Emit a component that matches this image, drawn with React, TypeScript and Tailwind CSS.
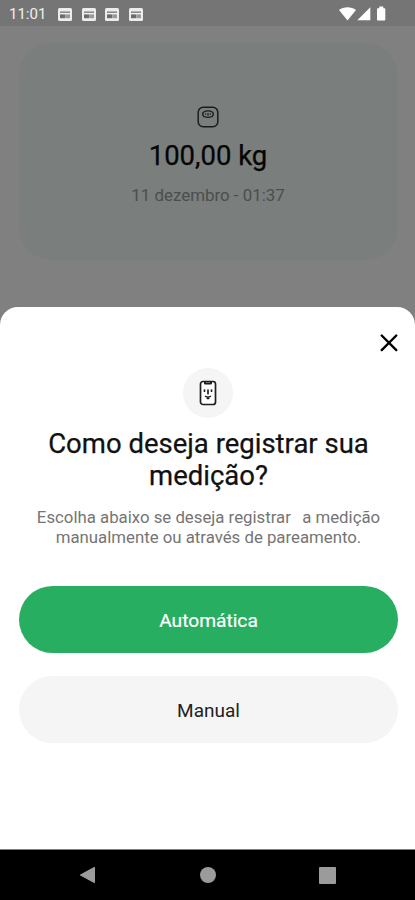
import { useState } from "react";

type Mode = "automatic" | "manual";

// Small "window" glyph used for pending notifications
function NotificationIcon() {
  return (
    <svg width="14" height="13" viewBox="0 0 14 13">
      <rect width="14" height="13" rx="1.5" fill="#ededed" />
      <rect x="2" y="3.4" width="10" height="1.6" fill="#8c8c8c" />
      <rect x="2" y="6.4" width="5.500" height="3.8" fill="#6c6c6c" />
      <rect x="8" y="6.4" width="4" height="3.8" fill="#999999" />
    </svg>
  );
}

function StatusBar() {
  return (
    <header className="flex h-[26px] shrink-0 items-center justify-between bg-[#757575] pt-[2px] pr-[28px] pl-[9px]">
      <div className="flex items-center">
        <span className="w-[49px] text-[15px] leading-none text-[#f0f0f0]">
          11:01
        </span>
        <div className="flex gap-[9.5px]">
          <NotificationIcon />
          <NotificationIcon />
          <NotificationIcon />
          <NotificationIcon />
        </div>
      </div>
      <svg width="48" height="16" viewBox="0 0 48 16" fill="#ffffff">
        <path d="M0 4C4.800.2 12.200.2 17 4L8.500 14.500Z" />
        <path d="M31.300 1.200V14.200H18.300Z" />
        <path d="M40.300.5h4v1.700h1.200a.8.8 0 0 1 .8.8v10.700a.8.8 0 0 1-.8.8h-6.700a.8.8 0 0 1-.8-.8V3a.8.8 0 0 1 .8-.8h1.500Z" />
      </svg>
    </header>
  );
}

function ScaleIcon() {
  return (
    <svg
      width="22"
      height="22"
      viewBox="0 0 22 22"
      fill="none"
      stroke="#1b1d1c"
      strokeWidth="1.500"
      strokeLinecap="round"
      strokeLinejoin="round"
    >
      <rect x="1.200" y="1.200" width="19.600" height="19.600" rx="5" />
      <path
        d="M6.300 6.200Q11 3.600 15.700 6.200Q17.200 8.200 15.300 10.500Q11 12.200 6.700 10.500Q4.800 8.200 6.300 6.200Z"
        strokeWidth="1.300"
      />
      <path d="M8.600 7.800v.5M13.400 7.800v.5M11 7.300v1.900" strokeWidth="1.200" />
    </svg>
  );
}

function PhoneFaceIcon() {
  return (
    <svg
      width="18"
      height="26"
      viewBox="0 0 18 26"
      fill="none"
      stroke="#1f1f1f"
      strokeWidth="1.700"
      strokeLinecap="round"
      strokeLinejoin="round"
    >
      <rect
        x="1.500"
        y="1.500"
        width="15"
        height="23"
        rx="2.500"
        fill="#ffffff"
      />
      <path d="M6 2.200v1.300h6V2.200" strokeWidth="2" />
      <path d="M5.500 10v1.200M12.500 10v1.200M9 10v3.700" />
      <path d="M6.500 16.300Q9 17.600 11.500 16.300M8.200 18.600h1.600" strokeWidth="1.500" />
    </svg>
  );
}

function NavigationBar() {
  return (
    <nav className="flex h-[51px] shrink-0 items-center justify-between border-t border-[#808080] bg-black px-[79px]">
      <svg width="17" height="18" viewBox="0 0 17 18">
        <path
          d="M1.300 9L15.500 1.300V16.700Z"
          fill="#9b9b9b"
          stroke="#9b9b9b"
          strokeLinejoin="round"
        />
      </svg>
      <span className="size-4 rounded-full bg-[#9b9b9b]" />
      <span className="size-[17px] rounded-[1px] bg-[#9b9b9b]" />
    </nav>
  );
}

export default function App() {
  const [mode, setMode] = useState<Mode | null>(null);

  return (
    <div className="flex h-[900px] w-[415px] flex-col overflow-hidden bg-[#808080] font-[Roboto,sans-serif]">
      <StatusBar />

      <main className="h-[281px] shrink-0 pt-[17px] pr-[17px] pl-[19px]">
        <section className="flex h-[217px] flex-col items-center rounded-[32px] bg-[#7a7e7c] pt-[63px] pr-[1px]">
          <ScaleIcon />
          <p className="mt-[12px] text-[27.5px] leading-8 font-normal text-[#050505] [-webkit-text-stroke:0.25px_#050505]">
            100,00 kg
          </p>
          <p className="mt-[13px] text-[16.9px] leading-5 text-[#4c4e4d]">
            11 dezembro - 01:37
          </p>
        </section>
      </main>

      {/* Bottom sheet */}
      <section
        role="dialog"
        aria-labelledby="sheet-title"
        className="flex flex-1 flex-col items-center rounded-t-[18px] bg-white pr-[17px] pl-[19px] text-center"
      >
        <button aria-label="Fechar" className="mt-[26px] -mr-[1px] self-end">
          <svg
            width="20"
            height="20"
            viewBox="0 0 20 20"
            stroke="#000000"
            strokeWidth="2.400"
            strokeLinecap="round"
          >
            <path d="M2.700 2.500L17.300 17.100M17.300 2.500L2.700 17.100" />
          </svg>
        </button>

        <div className="mt-[15px] mr-[1px] flex size-[50px] items-center justify-center rounded-full bg-[#f5f5f5]">
          <PhoneFaceIcon />
        </div>

        <h1
          id="sheet-title"
          className="mt-[10px] text-[27.5px] leading-8 font-normal text-[#111111] [-webkit-text-stroke:0.25px_#111111]"
        >
          Como deseja registrar sua
          <br />
          medição?
        </h1>
        <p className="mt-[15px] text-[16.8px] leading-5 whitespace-pre text-[#757575]">
          Escolha abaixo se deseja registrar
          <span className="tracking-[1.500px]">{"  "}</span>a medição
          <br />
          manualmente ou através de pareamento.
        </p>

        <button
          aria-pressed={mode === "automatic"}
          onClick={() => setMode("automatic")}
          className="mt-[39px] h-[67px] w-full rounded-full bg-[#27ae60] pt-[3px] text-[19.200px] font-normal text-white [-webkit-text-stroke:0.2px_#ffffff]"
        >
          Automática
        </button>
        <button
          aria-pressed={mode === "manual"}
          onClick={() => setMode("manual")}
          className="mt-[23px] h-[67px] w-full rounded-full bg-[#f5f5f5] pt-[3px] text-[19px] text-[#222222]"
        >
          Manual
        </button>
      </section>

      <NavigationBar />
    </div>
  );
}
